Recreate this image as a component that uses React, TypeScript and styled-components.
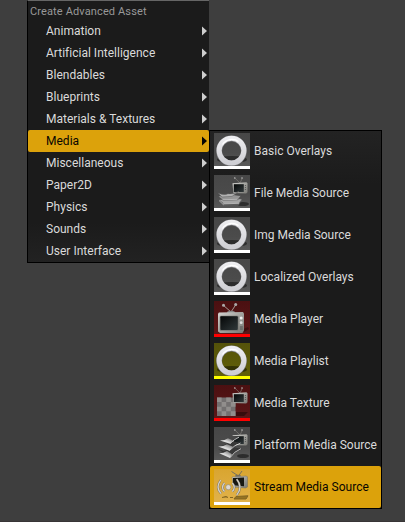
import React from "react";
import styled, { createGlobalStyle } from "styled-components";

const GlobalStyle = createGlobalStyle`
  * { box-sizing: border-box; }
  body {
    margin: 0;
    background: #3e3e3e;
    font-family: Roboto, sans-serif;
    font-size: 12px;
    overflow: hidden;
  }
`;

const Screen = styled.main`
  display: flex;
  align-items: flex-start;
  height: 522px;
  padding-left: 27px;
  background: #3e3e3e;
  border-bottom: 1px solid #383536;
`;

const CategoryMenu = styled.nav`
  width: 182px;
  height: 263px;
  border: 1px solid #000;
  border-top: 1px solid #666;
  border-right-color: #050505;
  border-right-width: 0;
  background: linear-gradient(#1b1b1b 0 85%, #222 100%);
`;

const Heading = styled.h1`
  margin: 0;
  padding: 0 2px;
  height: 19px;
  font-size: 11px;
  font-weight: 400;
  line-height: 21px;
  letter-spacing: 0.13px;
  color: #989898;
`;

const CategoryRow = styled.div<{ $active?: boolean }>`
  display: flex;
  align-items: center;
  justify-content: space-between;
  height: 22px;
  padding: 0 2px 0 18px;
  border-radius: 2px;
  color: ${(p) => (p.$active ? "#080602" : "#dadada")};
  background: ${(p) => (p.$active ? "#dca20b" : "transparent")};
`;

const Label = styled.span`
  white-space: nowrap;
  line-height: 20px;
  letter-spacing: 0.01px;
`;

const ArrowIcon = styled.svg<{ $active?: boolean }>`
  width: 5px;
  height: 10px;
  fill: ${(p) => (p.$active ? "#050505" : "#cecece")};
`;

const AssetMenu = styled.section`
  width: 173px;
  height: 379px;
  margin-top: 130px;
  border: 1px solid #000;
  background: linear-gradient(#232323, #1b1b1b 14%);
`;

const AssetList = styled.div`
  margin-top: -1px;
`;

const AssetRow = styled.div<{ $active?: boolean }>`
  display: flex;
  align-items: center;
  gap: 4px;
  height: 42px;
  padding-left: 4px;
  border-radius: 2px;
  color: ${(p) => (p.$active ? "#080602" : "#dadada")};
  background: ${(p) => (p.$active ? "#dca20b" : "transparent")};
`;

const Thumb = styled.div<{ $tint: string; $line: string }>`
  flex: none;
  width: 36px;
  height: 36px;
  background: ${(p) => p.$tint};
  border-bottom: 3px solid ${(p) => p.$line};
`;

const Drawing = styled.svg`
  display: block;
  width: 36px;
  height: 33px;
`;

type Kind = "ring" | "file" | "player" | "texture" | "platform" | "stream";

const Defs = () => (
  <defs>
    <linearGradient id="metal" x1="0" y1="0" x2="1" y2="1">
      <stop offset="0" stopColor="#d4d4d1" />
      <stop offset=".5" stopColor="#a3a39f" />
      <stop offset="1" stopColor="#777772" />
    </linearGradient>
    <linearGradient id="glass" x1="0" y1="0" x2="1" y2="1">
      <stop offset="0" stopColor="#050707" />
      <stop offset="1" stopColor="#30383a" />
    </linearGradient>
    <linearGradient id="torus" x1="0" y1="0" x2="0" y2="1">
      <stop offset="0" stopColor="#ededf0" />
      <stop offset="1" stopColor="#cfcfd4" />
    </linearGradient>
    <linearGradient id="page" x1="0" y1="1" x2="1" y2="0">
      <stop offset="0" stopColor="#fff" />
      <stop offset=".5" stopColor="#d5d5d5" />
      <stop offset="1" stopColor="#555" />
    </linearGradient>
  </defs>
);

const Ring = () => (
  <>
    <ellipse cx="18" cy="26.5" rx="15" ry="3.6" fill="#000" opacity=".45" />
    <circle cx="17.5" cy="17.9" r="12.4" stroke="#77777a" strokeWidth="5.8" />
    <circle cx="17.5" cy="17.6" r="12.4" stroke="url(#torus)" strokeWidth="5.1" />
    <path d="M8.5 11.5a11.5 11.5 0 0 1 16-3" stroke="#fff" strokeWidth="1.3" />
  </>
);

const SmallTv = () => (
  <>
    <path d="M26 8l-5.2-5M26 8l2.3-4.8" stroke="#86837d" strokeWidth=".6" />
    <circle cx="20.8" cy="3" r=".8" fill="#bbb" />
    <circle cx="28" cy="3" r=".8" fill="#bbb" />
    <path d="M18.5 8.2l14-.9 1 1v9l-1.4 1.3-12.8-.6z" fill="url(#metal)" />
    <path d="M19.8 9.2h10v7.8h-10z" fill="url(#glass)" />
    <path d="M31.4 10v6" stroke="#555" strokeWidth="1" strokeDasharray="1 1" />
  </>
);

const DarkSheets = () => (
  <>
    <path d="M4 22l12 8q5-5 12-8l-10-2-8 4z" fill="#333" />
    <path d="M5 26.2q6-.7 12-6l9 1.3q-6 3-10 9.2z" fill="#383838" />
    <path d="M5 26.2q4 .3 8-2.2l5 3.2-2 3.8z" fill="url(#page)" />
    <path d="M4 19.5q6-.5 12-5.5l10 1.5q-7 3-11 8z" fill="#383838" />
    <path d="M4 19.5q5 .3 9-2.2l6 2.5-3.5 4z" fill="url(#page)" />
    <path d="M6 13.6q6-1 10-5.2l10 1.4q-6 2-10 7z" fill="#484848" />
    <path d="M6 13.6q5-.2 8-2.4l5 2.2-3 3.4z" fill="url(#page)" />
    <path d="M16 30.7q4-6.3 11-9M15.5 23.5q5-5.5 11-7.5M16 16.8q4-4.6 9-6.6" stroke="#ddd" strokeWidth=".8" />
  </>
);

const Books = () => (
  <>
    <path d="M5 25l5 6 15-1 3-6-12-2z" fill="#5c5c5c" />
    <path d="M5 25l5 4 15-.6 3-4.2-12-1.8z" fill="#a5a5a5" stroke="#505050" strokeWidth=".5" />
    <path d="M4 21.2l5 4.1 15-.6 3-4-12-1.5z" fill="#969696" stroke="#444" strokeWidth=".6" />
    <path d="M4 18q6 2.8 10 .7 6 1 11-2.5l-7 5.2-10 .6z" fill="#b2b2b2" stroke="#555" strokeWidth=".5" />
    <path d="M9 28.9l16-.6M8.5 24.8l15-.5M5 25.5l4.5 4.3" stroke="#d0d0d0" strokeWidth=".7" />
  </>
);

const Art = ({ kind }: { kind: Kind }) => (
  <Drawing viewBox="0 0 36 33" fill="none">
    <Defs />
    {kind === "ring" && <Ring />}
    {kind === "player" && (
      <>
        <path d="M17 11L9.6 4.5M17 11l4.6-7" stroke="#aaa7a1" strokeWidth=".9" />
        <circle cx="9.5" cy="4.3" r="1.5" fill="#aaa" />
        <circle cx="21.7" cy="3.6" r="1.5" fill="#aaa" />
        <ellipse cx="17" cy="11.5" rx="4" ry="1.8" fill="#888" />
        <path d="M25 30l9-4 1 2-5 3z" fill="#1d0505" opacity=".5" />
        <path d="M4 12.5l1-1 24-.5 1 1.5v17L28.5 32H6l-2-1.5z" fill="url(#metal)" />
        <rect x="5.7" y="14.7" width="18.8" height="15" rx="1.2" fill="#777772" />
        <rect x="6.4" y="15.3" width="17.4" height="13.8" rx="1" fill="url(#glass)" />
        <circle cx="27.2" cy="17" r="1.5" fill="#eee" />
        <circle cx="27.2" cy="21.7" r="1.4" fill="#ddd" />
        <path d="M25.8 26h3M25.8 28h3" stroke="#555" />
      </>
    )}
    {(kind === "file" || kind === "platform") && (
      <>
        <ellipse cx="29" cy="29" rx="6" ry="2" fill="#171717" opacity=".65" />
        <SmallTv />
        {kind === "platform" ? <DarkSheets /> : <Books />}
      </>
    )}
    {kind === "texture" && (
      <>
        <path d="M21 27h13l-4 4h-9z" fill="#210707" opacity=".6" />
        <rect x="3" y="12.5" width="18.5" height="18.5" fill="#737070" />
        <path
          d="M3 12.5h4.6v4.6H3zM12.2 12.5h4.6v4.6h-4.6zM7.6 17.1h4.6v4.6H7.6zM16.8 17.1h4.7v4.6h-4.7zM3 21.7h4.6v4.6H3zM12.2 21.7h4.6v4.6h-4.6zM7.6 26.3h4.6V31H7.6zM16.8 26.3h4.7V31h-4.7z"
          fill="#918e8c"
        />
        <SmallTv />
      </>
    )}
    {kind === "stream" && (
      <>
        <path d="M24.5 7l-7-4.5M24.5 7l3.5-5" stroke="#77705f" />
        <ellipse cx="24" cy="7" rx="3" ry="1.2" fill="#77705f" />
        <path d="M18 8l14.5-1 1 1v10l-2 1-12-1z" fill="url(#metal)" stroke="#77705f" strokeWidth=".5" />
        <path d="M19 9l11-.6v8.8l-11-1z" fill="#171712" />
        <path d="M8 28.5l4-1 2 1M16 28.5h3M22 27.5l12-.7-2 3.2H20z" fill="#957322" stroke="#816522" />
        <circle cx="14.3" cy="18.2" r="2.6" fill="#ddd9d1" stroke="#777266" strokeWidth=".5" />
        <path
          d="M10.5 14q-4 4.5 0 8.5M6.7 11.2q-5.5 7 .3 13.4M18.3 14q4 4.5 0 8.5M22.7 10.2q6.5 8 0 16"
          stroke="#77705f"
          strokeWidth="2.1"
        />
        <path
          d="M10.5 14q-4 4.5 0 8.5M6.7 11.2q-5.5 7 .3 13.4M18.3 14q4 4.5 0 8.5M22.7 10.2q6.5 8 0 16"
          stroke="#d5d2cb"
          strokeWidth="1.3"
        />
      </>
    )}
  </Drawing>
);

const GRAY = "linear-gradient(#474747, #4b4b4b 60%, #595959)";
const RED = "linear-gradient(#4b1011, #5b1718)";
const OLIVE = "linear-gradient(#54520a, #626007)";
const GOLD = "linear-gradient(#d9a530, #e1b24b)";

const categories = [
  "Animation",
  "Artificial Intelligence",
  "Blendables",
  "Blueprints",
  "Materials & Textures",
  "Media",
  "Miscellaneous",
  "Paper2D",
  "Physics",
  "Sounds",
  "User Interface",
];

const assets: { name: string; kind: Kind; tint: string; line: string }[] = [
  { name: "Basic Overlays", kind: "ring", tint: GRAY, line: "#fff" },
  { name: "File Media Source", kind: "file", tint: GRAY, line: "#fff" },
  { name: "Img Media Source", kind: "ring", tint: GRAY, line: "#fff" },
  { name: "Localized Overlays", kind: "ring", tint: GRAY, line: "#fff" },
  { name: "Media Player", kind: "player", tint: RED, line: "#f00" },
  { name: "Media Playlist", kind: "ring", tint: OLIVE, line: "#ff0" },
  { name: "Media Texture", kind: "texture", tint: RED, line: "#f00" },
  { name: "Platform Media Source", kind: "platform", tint: GRAY, line: "#fff" },
  { name: "Stream Media Source", kind: "stream", tint: GOLD, line: "#fff" },
];

export default function App() {
  return (
    <>
      <GlobalStyle />
      <Screen>
        <CategoryMenu>
          <Heading>Create Advanced Asset</Heading>
          {categories.map((name) => (
            <CategoryRow key={name} $active={name === "Media"}>
              <Label>{name}</Label>
              <ArrowIcon viewBox="0 0 5 10" $active={name === "Media"}>
                <path d="M0 .5L5 5 0 9.5z" />
              </ArrowIcon>
            </CategoryRow>
          ))}
        </CategoryMenu>
        <AssetMenu>
          <AssetList>
            {assets.map((a) => (
              <AssetRow key={a.name} $active={a.kind === "stream"}>
                <Thumb $tint={a.tint} $line={a.line}>
                  <Art kind={a.kind} />
                </Thumb>
                <Label>{a.name}</Label>
              </AssetRow>
            ))}
          </AssetList>
        </AssetMenu>
      </Screen>
    </>
  );
}
